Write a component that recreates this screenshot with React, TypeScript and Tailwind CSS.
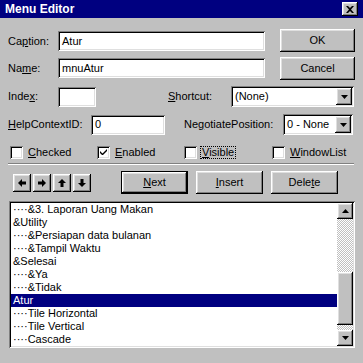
import React from 'react';

const raised =
  'bg-[#c0c0c0] shadow-[inset_-1px_-1px_#000,inset_1px_1px_#fff,inset_-2px_-2px_#808080,inset_2px_2px_#dfdfdf]';
const sunken =
  'bg-white shadow-[inset_1px_1px_#808080,inset_-1px_-1px_#fff,inset_2px_2px_#000,inset_-2px_-2px_#dfdfdf]';

const items = [
  '····&3. Laporan Uang Makan',
  '&Utility',
  '····&Persiapan data bulanan',
  '····&Tampil Waktu',
  '&Selesai',
  '····&Ya',
  '····&Tidak',
  'Atur',
  '····Tile Horizontal',
  '····Tile Vertical',
  '····Cascade',
];

const U = ({ children }: { children: React.ReactNode }) => <span className="underline underline-offset-[1px]">{children}</span>;

const Field = ({ value, className }: { value?: string; className: string }) => (
  <div className={`${sunken} ${className} h-[20px] flex items-center pl-[4px]`}>{value}</div>
);

const DownTri = () => (
  <svg width="7" height="4" viewBox="0 0 7 4">
    <path d="M0 0H7L3.5 4Z" fill="#000" />
  </svg>
);

const UpTri = () => (
  <svg width="7" height="4" viewBox="0 0 7 4">
    <path d="M0 4H7L3.5 0Z" fill="#000" />
  </svg>
);

const Combo = ({ value, className }: { value: string; className: string }) => (
  <div className={`${sunken} ${className} h-[21px] flex items-center pl-[4px] pr-[2px]`}>
    <span className="flex-1">{value}</span>
    <div className={`${raised} w-[16px] h-[17px] flex items-center justify-center`}>
      <DownTri />
    </div>
  </div>
);

const Check = ({ checked, label, focus, className }: { checked?: boolean; label: React.ReactNode; focus?: boolean; className: string }) => (
  <div className={`flex items-center h-[13px] ${className}`}>
    <div className={`${sunken} w-[13px] h-[13px] flex items-center justify-center`}>
      {checked && (
        <svg width="7" height="7" viewBox="0 0 7 7">
          <path d="M0 2V4L2 6H3L7 2V0L2.5 4.5Z" fill="#000" />
        </svg>
      )}
    </div>
    <span className={`ml-[4px] px-[1px] ${focus ? 'outline outline-1 outline-dotted outline-black' : ''}`}>{label}</span>
  </div>
);

// move buttons: left, right, up, down
const arrows = [
  'M0 4L4 0V2.5H8V5.5H4V8Z',
  'M8 4L4 0V2.5H0V5.5H4V8Z',
  'M4 0L8 4H5.5V8H2.5V4H0Z',
  'M4 8L8 4H5.5V0H2.5V4H0Z',
];

export default function App() {
  return (
    <div className="w-[363px] h-[363px] overflow-hidden bg-[#c0c0c0] text-black text-[11px] leading-none font-['Liberation_Sans',Arial,sans-serif] flex flex-col">
      <div className="h-[18px] bg-[#000080] flex items-center pl-[5px] pr-[5px]">
        <span className="text-white font-bold text-[12px] flex-1">Menu Editor</span>
        <div className={`${raised} w-[16px] h-[14px] flex items-center justify-center`}>
          <svg width="8" height="7" viewBox="0 0 8 7">
            <path d="M0 0H2L4 2L6 0H8L5 3.5L8 7H6L4 5L2 7H0L3 3.5Z" fill="#000" />
          </svg>
        </div>
      </div>

      <div className="px-[8px] flex flex-col">
        <div className="mt-[11px] flex">
          <div className="flex flex-col pt-[2px]">
            <div className="flex items-center h-[20px]">
              <span className="w-[50px]">Ca<U>p</U>tion:</span>
              <Field value="Atur" className="w-[207px]" />
            </div>
            <div className="flex items-center h-[20px] mt-[7px]">
              <span className="w-[50px]">Na<U>m</U>e:</span>
              <Field value="mnuAtur" className="w-[207px]" />
            </div>
          </div>
          <div className="ml-auto flex flex-col gap-[5px]">
            <button className={`${raised} w-[75px] h-[23px]`}>OK</button>
            <button className={`${raised} w-[75px] h-[23px]`}>Cancel</button>
          </div>
        </div>

        <div className="mt-[6px] flex items-center h-[21px]">
          <span className="w-[50px]">Inde<U>x</U>:</span>
          <Field className="w-[38px]" />
          <span className="ml-[72px] w-[63px]"><U>S</U>hortcut:</span>
          <Combo value="(None)" className="w-[123px]" />
        </div>

        <div className="mt-[7px] flex items-center h-[21px]">
          <span className="w-[83px]"><U>H</U>elpContextID:</span>
          <Field value="0" className="w-[74px]" />
          <span className="ml-[19px] w-[99px]">Ne<U>g</U>otiatePosition:</span>
          <Combo value="0 - None" className="w-[70px]" />
        </div>

        <div className="mt-[11px] flex">
          <Check label={<><U>C</U>hecked</>} className="ml-[2px] w-[87px]" />
          <Check checked label={<><U>E</U>nabled</>} className="w-[87px]" />
          <Check focus label={<><U>V</U>isible</>} className="w-[88px]" />
          <Check label={<><U>W</U>indowList</>} className="" />
        </div>

        <div className="mt-[4px] w-[346px] h-[2px] border-t border-t-[#808080] border-b border-b-white" />

        <div className="mt-[6px] flex items-center h-[23px]">
          <div className="ml-[5px] flex gap-[2px]">
            {arrows.map((d) => (
              <div key={d} className={`${raised} w-[18px] h-[18px] flex items-center justify-center`}>
                <svg width="8" height="8" viewBox="0 0 8 8">
                  <path d={d} fill="#000" />
                </svg>
              </div>
            ))}
          </div>
          <button className="ml-[30px] w-[67px] h-[23px] bg-[#c0c0c0] shadow-[inset_0_0_0_1px_#000,inset_-2px_-2px_#000,inset_2px_2px_#fff,inset_-3px_-3px_#808080,inset_3px_3px_#dfdfdf]">
            <U>N</U>ext
          </button>
          <button className={`${raised} ml-[8px] w-[67px] h-[23px]`}>
            <U>I</U>nsert
          </button>
          <button className={`${raised} ml-[8px] w-[67px] h-[23px]`}>
            Dele<U>t</U>e
          </button>
        </div>

        <div className={`${sunken} mt-[7px] ml-[1px] w-[346px] h-[147px] p-[2px] flex`}>
          <div className="flex-1 flex flex-col">
            {items.map((t) => (
              <div
                key={t}
                className={`h-[13px] flex items-center pl-[2px] ${t === 'Atur' ? 'bg-[#000080] text-white' : ''}`}
              >
                {t}
              </div>
            ))}
          </div>
          <div className="w-[16px] flex flex-col">
            <div className={`${raised} h-[16px] flex items-center justify-center`}>
              <UpTri />
            </div>
            <div className="h-[53px] bg-[image:repeating-conic-gradient(#c0c0c0_0_25%,#ffffff_0_50%)] bg-[length:2px_2px]" />
            <div className={`${raised} h-[53px]`} />
            <div className="flex-1 bg-[image:repeating-conic-gradient(#c0c0c0_0_25%,#ffffff_0_50%)] bg-[length:2px_2px]" />
            <div className={`${raised} h-[16px] flex items-center justify-center`}>
              <DownTri />
            </div>
          </div>
        </div>
      </div>
    </div>
  );
}
